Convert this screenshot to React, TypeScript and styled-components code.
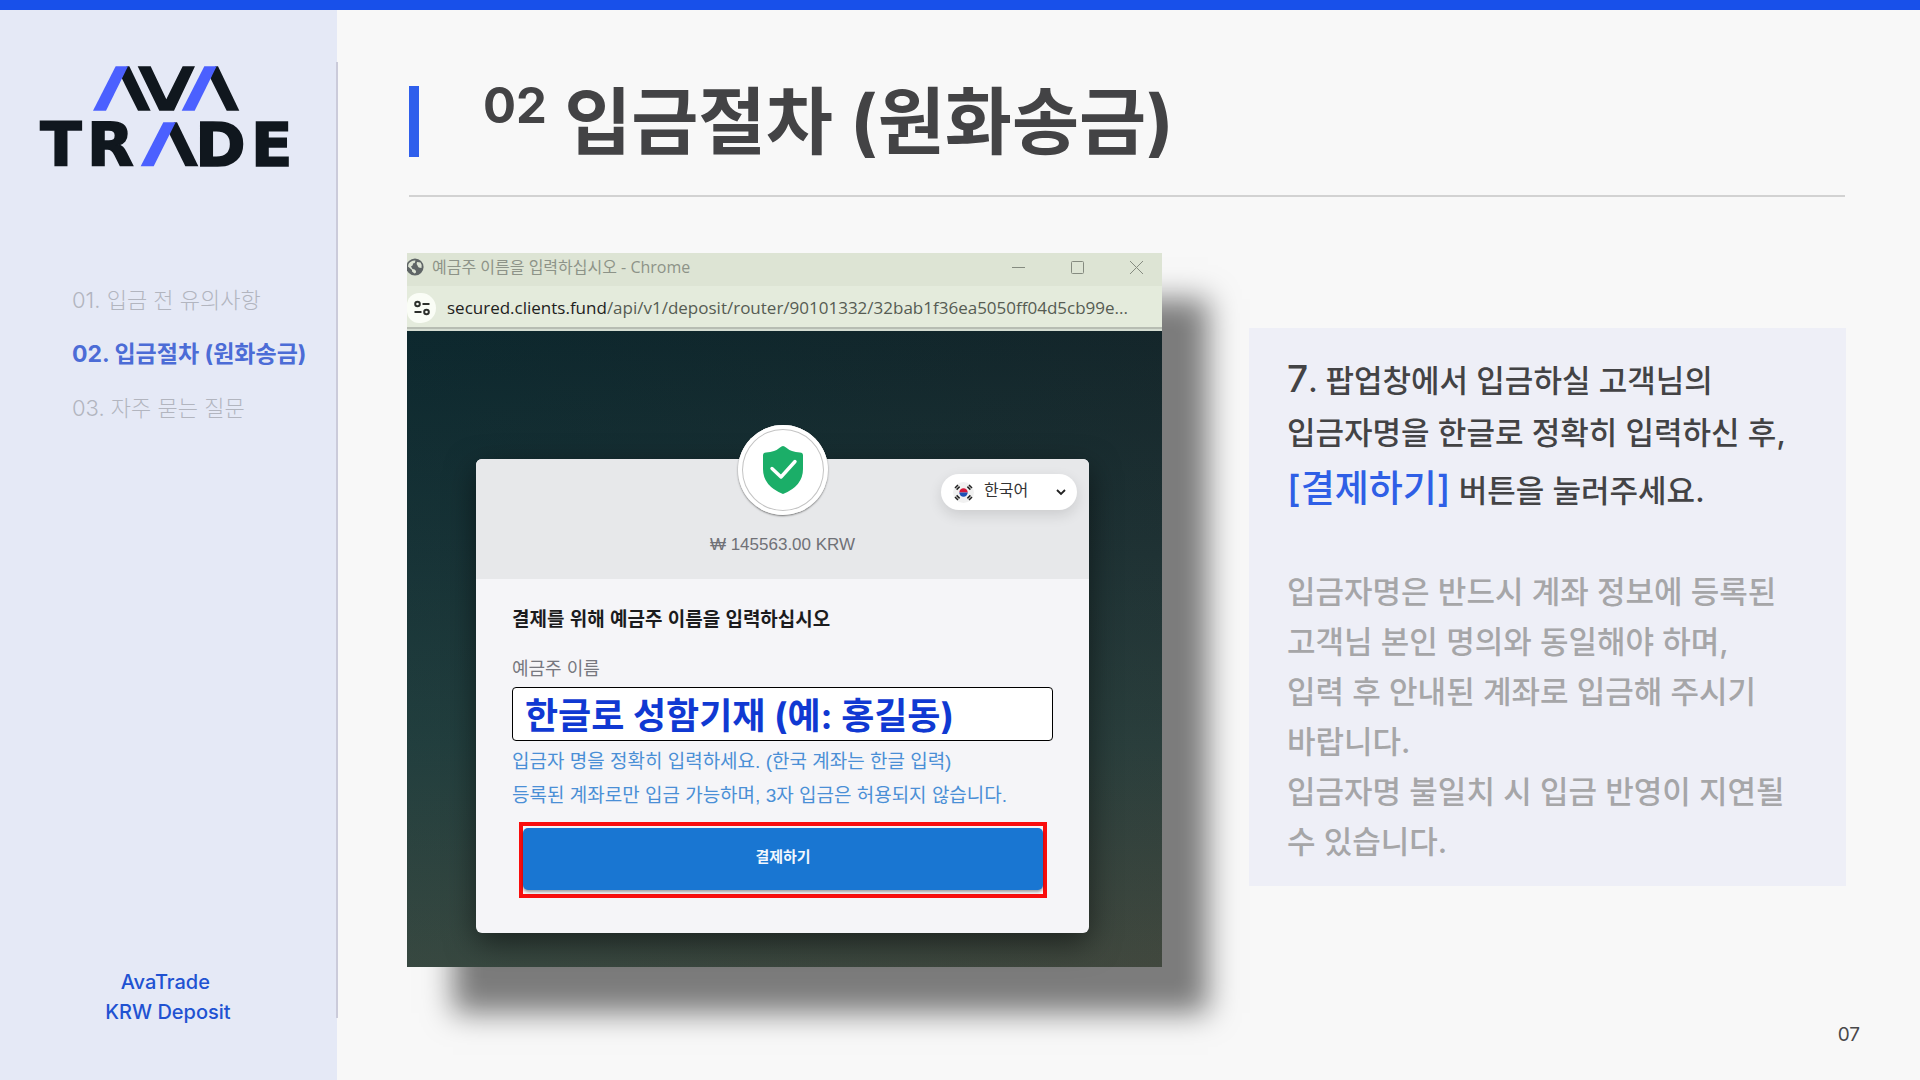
import React from "react";
import styled, { createGlobalStyle } from "styled-components";

const sans = `Inter, "Noto Sans CJK KR", sans-serif`;
const systemUi = `"Liberation Sans", "Noto Sans CJK KR", sans-serif`;
const chromeUi = `"Open Sans", "Noto Sans CJK KR", sans-serif`;

const GlobalStyle = createGlobalStyle`
  *, *::before, *::after { box-sizing: border-box; }
  body { margin: 0; background: #f8f8f8; font-family: ${sans}; color: #434345; word-break: keep-all; }
  h1, h2, p, ul { margin: 0; padding: 0; }
  button, input, select { font: inherit; margin: 0; }
`;

const Page = styled.div`
  display: flex;
  min-height: 100vh;
  border-top: 10px solid #1850ea;
`;

/* ---------- Sidebar ---------- */

const Sidebar = styled.aside`
  flex: 0 0 337px;
  display: flex;
  padding: 52px 0 62px;
  background: #e5e9f6;
`;

const SidebarInner = styled.div`
  flex: 1;
  display: flex;
  flex-direction: column;
  margin-right: -1px;
  border-right: 2px solid #cbcbda;
`;

const LogoMark = styled.svg`
  display: block;
  width: 260px;
  height: 101px;
  margin: 4px 0 0 37px;
  overflow: visible;
`;

const LogoLetters = styled.text`
  font-family: "DejaVu Sans", sans-serif;
  font-weight: 700;
  font-size: 182px;
  fill: #10171e;
  stroke: #10171e;
  stroke-width: 5px;
`;

const NavList = styled.ul`
  display: flex;
  flex-direction: column;
  gap: 22px;
  margin: 117px 0 0 72px;
  list-style: none;
`;

const NavLink = styled.a<{ $active?: boolean }>`
  display: block;
  font-size: ${(p) => (p.$active ? 23 : 22)}px;
  line-height: 32px;
  white-space: nowrap;
  text-decoration: none;
  font-weight: ${(p) => (p.$active ? 700 : 300)};
  color: ${(p) => (p.$active ? "#4c6cd6" : "#b2b5bf")};
`;

const SidebarFooter = styled.p`
  margin: auto 0 -9px;
  text-align: center;
  font-size: 20px;
  font-weight: 500;
  line-height: 30px;
  color: #2152d2;
`;

/* ---------- Main ---------- */

const Main = styled.main`
  flex: 1;
  min-width: 0;
  display: flex;
  flex-direction: column;
  padding: 76px 74px 22px 70px;
`;

const Header = styled.header`
  display: flex;
  align-items: stretch;
  gap: 64px;
  margin: 0 1px 56px 2px;
  padding-bottom: 38px;
  border-bottom: 2px solid #d2d2d2;
`;

const Accent = styled.span`
  flex: 0 0 10px;
  background: #2f5fec;
`;

const Title = styled.h1`
  height: 71px;
  font-size: 73px;
  font-weight: 700;
  line-height: 72px;
  color: #434345;
`;

const TitleNumber = styled.sup`
  font-size: 49px;
  line-height: 0;
`;

const Content = styled.div`
  display: grid;
  grid-template-columns: minmax(0, 755fr) minmax(0, 597fr);
  column-gap: 87px;
  align-items: start;
`;

/* ---------- Browser window ---------- */

const BrowserWindow = styled.section`
  box-shadow: 46px 46px 28px rgba(0, 0, 0, 0.5);
`;

const TitleBar = styled.div`
  display: flex;
  align-items: center;
  height: 33px;
  padding-right: 18px;
  background: #dde4d4;
  font-family: ${chromeUi};
  font-size: 16px;
  line-height: 24px;
  color: #8d9388;
`;

const TitleIcon = styled.svg`
  width: 17px;
  height: 18px;
  margin: 0 8px 6px 0;
`;

const WindowTitle = styled.span`
  flex: 1;
  padding-bottom: 6px;
`;

const WindowControls = styled.div`
  display: flex;
  gap: 44px;
  padding-bottom: 5px;
`;

const WindowButton = styled.button`
  display: flex;
  padding: 0;
  border: 0;
  background: none;
  color: #858b80;
`;

const AddressBar = styled.div`
  display: flex;
  align-items: center;
  gap: 11px;
  height: 45px;
  background: #e4ebdc;
  border-bottom: 2px solid #d5ddd2;
  box-shadow: inset 0 -2px 0 #b7bdb3;
  font-family: ${chromeUi};
  font-size: 17px;
  line-height: 26px;
  color: #565c53;
`;

const SiteInfo = styled.button`
  display: flex;
  align-items: center;
  justify-content: center;
  width: 29px;
  height: 30px;
  padding: 0;
  border: 0;
  border-radius: 12px 15px 15px 12px;
  background: #fafdf6;
`;

const Url = styled.span`
  min-width: 0;
  overflow: hidden;
  white-space: nowrap;
`;

const Domain = styled.span`
  color: #1e211d;
`;

const Viewport = styled.div`
  padding: 128px 73px 34px 69px;
  background:
    linear-gradient(90deg, rgba(12, 56, 58, 0.2), rgba(60, 50, 40, 0.15)),
    linear-gradient(180deg, #0d242b 0%, #1a3236 35%, #27403f 65%, #424c42 100%);
`;

const Card = styled.div`
  border-radius: 6px;
  background: #f5f5f8;
  box-shadow: 0 10px 30px rgba(0, 0, 0, 0.5);
`;

const CardHeader = styled.div`
  display: grid;
  grid-template-columns: 1fr auto 1fr;
  height: 120px;
  padding-right: 12px;
  padding-left: 12px;
  border-radius: 6px 6px 0 0;
  background: #e7e8ea;
`;

const Summary = styled.div`
  grid-column: 2;
  display: flex;
  flex-direction: column;
  align-items: center;
  margin-top: -34px;
`;

const Badge = styled.div`
  display: flex;
  align-items: center;
  justify-content: center;
  width: 90px;
  height: 90px;
  border-radius: 50%;
  background: #fff;
  box-shadow: inset 0 0 0 4px #fff, inset 0 0 0 5px #c4c4c4, 0 1px 2px rgba(0, 0, 0, 0.5);
`;

const Amount = styled.p`
  margin-top: 20px;
  font-family: ${systemUi};
  font-size: 17px;
  line-height: 20px;
  color: #707177;
`;

const LanguagePicker = styled.label`
  justify-self: end;
  display: flex;
  align-items: center;
  gap: 10px;
  width: 136px;
  height: 36px;
  margin-top: 15px;
  padding: 0 10px 0 12px;
  border-radius: 18px;
  background: #fff;
  box-shadow: 0 5px 14px rgba(0, 0, 0, 0.12);
`;

const LanguageSelect = styled.select`
  flex: 1;
  min-width: 0;
  height: 30px;
  padding: 0 0 4px;
  border: 0;
  appearance: none;
  background: none;
  font-family: ${systemUi};
  font-size: 16px;
  color: #333;
`;

const Form = styled.form`
  padding: 27px 36px 35px;
  font-family: ${systemUi};
`;

const FormTitle = styled.h2`
  font-size: 19px;
  line-height: 28px;
  font-weight: 700;
  color: #1b1b1d;
`;

const FieldLabel = styled.label`
  display: block;
  margin-top: 23px;
  font-size: 18px;
  line-height: 24px;
  color: #77787f;
`;

const NameInput = styled.input`
  display: block;
  width: 100%;
  height: 54px;
  margin: 6px 0 4px;
  padding: 0 12px 3px;
  border: 1px solid #000;
  border-radius: 4px;
  background: #fff;
  font-family: ${sans};
  font-size: 36px;
  font-weight: 700;
  color: #1039d2;
`;

const Hint = styled.p`
  font-size: 19px;
  line-height: 34px;
  white-space: nowrap;
  color: #4a8fd6;
`;

const Highlight = styled.div`
  margin: 9px 6px 0 7px;
  padding: 2px 0 4px;
  border: 4px solid #f90d0d;
`;

const PayButton = styled.button`
  display: block;
  width: 100%;
  height: 62px;
  padding: 0 0 8px;
  border: 0;
  border-radius: 5px;
  background: #1976d2;
  box-shadow: 0 2px 3px rgba(0, 0, 0, 0.35);
  font-size: 15px;
  font-weight: 700;
  color: #f2f7fd;
`;

/* ---------- Explanation panel ---------- */

const Panel = styled.section`
  margin-top: 75px;
  padding: 25px 38px 19px;
  background: #eeeff7;
  font-size: 31px;
  font-weight: 500;
`;

const Lead = styled.p`
  line-height: 52px;
  color: #434345;
`;

const Big = styled.span`
  font-size: 37px;
`;

const Strong = styled.strong`
  font-size: 37px;
  font-weight: 500;
  line-height: 60px;
  color: #2f5fe6;
`;

const Note = styled.p`
  margin-top: 48px;
  line-height: 50px;
  color: #a6a6a8;
`;

const PageNumber = styled.footer`
  margin: auto -14px 0 0;
  text-align: right;
  font-size: 19px;
  line-height: 46px;
  color: #48484a;
`;

const Logo = () => (
  <LogoMark viewBox="111 197 780 303" role="img" aria-label="AvaTrade">
    <g fill="#10171e">
      <polygon points="388,198 452,331 414,331 365,233 380,198" />
      <polygon points="413,198 452,198 499,297 548,198 585,198 522,331 478,331" />
      <polygon points="654,198 718,331 680,331 631,233 646,198" />
      <polygon points="531,366 595,498 556,498 508,400 522,366" />
    </g>
    <g fill="#4b60ff">
      <polygon points="347,198 384,198 318,331 279,331" />
      <polygon points="613,198 650,198 584,331 545,331" />
      <polygon points="490,366 527,366 461,498 422,498" />
    </g>
    <LogoLetters x="121 261" y="496">TR</LogoLetters>
    <LogoLetters x="586 753" y="496">DE</LogoLetters>
  </LogoMark>
);

const Globe = () => (
  <TitleIcon viewBox="0 0 17 18" aria-hidden="true">
    <circle cx="8" cy="9" r="8.6" fill="#5f6566" />
    <path
      d="M1 8.5 L5 12 L5 13.5 L7.5 15.5 Q9.5 15 9 13 Q8 11 5.5 11 L4 8.5 Q6.500 7.500 6 5.500 Q8.500 5 8.500 2.500 Q4 2 1.500 6 Z M10 4 Q9 6 10.500 7.500 Q11 10 14.500 10 Q15.500 7 13.500 4.500 Z"
      fill="#dde4d4"
    />
  </TitleIcon>
);

const Tune = () => (
  <svg width="16" height="16" viewBox="0 0 16 16" fill="none" stroke="#2c2f2b" strokeWidth="2" aria-hidden="true">
    <circle cx="3.500" cy="4" r="2.300" />
    <path d="M8.500 4 H15.500 M0.500 12 H7.500" />
    <circle cx="12.500" cy="12" r="2.300" />
  </svg>
);

const Shield = () => (
  <svg width="42" height="50" viewBox="0 0 42 50" aria-hidden="true">
    <path
      d="M21 1 Q22.500 1 24 2.500 Q29 7 38 7.500 Q41 7.700 41 10.500 V24 Q41 41 21 49 Q1 41 1 24 V10.500 Q1 7.700 4 7.500 Q13 7 18 2.500 Q19.500 1 21 1 Z"
      fill="#1bae68"
    />
    <path d="M10 23.500 L19 32 L33 16.500" fill="none" stroke="#fff" strokeWidth="3.400" strokeLinecap="round" strokeLinejoin="round" />
  </svg>
);

const Flag = () => (
  <svg width="21" height="21" viewBox="0 0 21 21" aria-hidden="true">
    <circle cx="10.500" cy="10.500" r="10.500" fill="#f1f1f1" />
    <path d="M6.300 10.500 A4.200 4.200 0 0 1 14.700 10.500 Z" fill="#d4183a" />
    <path d="M6.300 10.500 A4.200 4.200 0 0 0 14.700 10.500 Z" fill="#1d50b5" />
    <g stroke="#222" strokeWidth="1.500">
      <path d="M2 6 L5 3 M3.600 7.600 L6.600 4.600" />
      <path d="M16 3 L19 6 M14.400 4.600 L17.400 7.600" />
      <path d="M2 15 L5 18 M3.600 13.400 L6.600 16.400" />
      <path d="M16 18 L19 15 M14.400 16.400 L17.400 13.400" />
    </g>
  </svg>
);

const navItems = [
  { label: "01. 입금 전 유의사항" },
  { label: "02. 입금절차 (원화송금)", active: true },
  { label: "03. 자주 묻는 질문" },
];

export default function App() {
  return (
    <>
      <GlobalStyle />
      <Page>
        <Sidebar>
          <SidebarInner>
            <Logo />
            <nav>
              <NavList>
                {navItems.map((item) => (
                  <li key={item.label}>
                    <NavLink href="#" $active={item.active}>
                      {item.label}
                    </NavLink>
                  </li>
                ))}
              </NavList>
            </nav>
            <SidebarFooter>
              AvaTrade&nbsp;
              <br />
              KRW Deposit
            </SidebarFooter>
          </SidebarInner>
        </Sidebar>

        <Main>
          <Header>
            <Accent />
            <Title>
              <TitleNumber>02</TitleNumber> 입금절차 (원화송금)
            </Title>
          </Header>

          <Content>
            <BrowserWindow>
              <TitleBar>
                <Globe />
                <WindowTitle>예금주 이름을 입력하십시오 - Chrome</WindowTitle>
                <WindowControls>
                  <WindowButton aria-label="최소화">
                    <svg width="15" height="15" viewBox="0 0 15 15" stroke="currentColor">
                      <path d="M1 7.500 H14" />
                    </svg>
                  </WindowButton>
                  <WindowButton aria-label="최대화">
                    <svg width="15" height="15" viewBox="0 0 15 15" fill="none" stroke="currentColor">
                      <rect x="1.500" y="1.500" width="12" height="12" rx="1" />
                    </svg>
                  </WindowButton>
                  <WindowButton aria-label="닫기">
                    <svg width="15" height="15" viewBox="0 0 15 15" stroke="currentColor">
                      <path d="M1 1 L14 14 M14 1 L1 14" />
                    </svg>
                  </WindowButton>
                </WindowControls>
              </TitleBar>
              <AddressBar>
                <SiteInfo aria-label="사이트 정보">
                  <Tune />
                </SiteInfo>
                <Url>
                  <Domain>secured.clients.fund</Domain>
                  /api/v1/deposit/router/90101332/32bab1f36ea5050ff04d5cb99e...
                </Url>
              </AddressBar>
              <Viewport>
                <Card>
                  <CardHeader>
                    <Summary>
                      <Badge>
                        <Shield />
                      </Badge>
                      <Amount>₩ 145563.00 KRW</Amount>
                    </Summary>
                    <LanguagePicker>
                      <Flag />
                      <LanguageSelect aria-label="언어" defaultValue="ko">
                        <option value="ko">한국어</option>
                      </LanguageSelect>
                      <svg width="12" height="12" viewBox="0 0 12 12" fill="none" stroke="#222" strokeWidth="1.800" aria-hidden="true">
                        <path d="M2 4 L6 8 L10 4" />
                      </svg>
                    </LanguagePicker>
                  </CardHeader>
                  <Form onSubmit={(e: React.FormEvent) => e.preventDefault()}>
                    <FormTitle>결제를 위해 예금주 이름을 입력하십시오</FormTitle>
                    <FieldLabel htmlFor="holder">예금주 이름</FieldLabel>
                    <NameInput id="holder" type="text" defaultValue="한글로 성함기재 (예: 홍길동)" />
                    <Hint>입금자 명을 정확히 입력하세요. (한국 계좌는 한글 입력)</Hint>
                    <Hint>등록된 계좌로만 입금 가능하며, 3자 입금은 허용되지 않습니다.</Hint>
                    <Highlight>
                      <PayButton type="submit">결제하기</PayButton>
                    </Highlight>
                  </Form>
                </Card>
              </Viewport>
            </BrowserWindow>

            <Panel>
              <Lead>
                <Big>7</Big>. 팝업창에서 입금하실 고객님의
                <br />
                입금자명을 한글로 정확히 입력하신 후,
                <br />
                <Strong>[결제하기]</Strong> 버튼을 눌러주세요.
              </Lead>
              <Note>
                입금자명은 반드시 계좌 정보에 등록된 고객님 본인 명의와 동일해야 하며,
                <br />
                입력 후 안내된 계좌로 입금해 주시기 바랍니다.
                <br />
                입금자명 불일치 시 입금 반영이 지연될 수 있습니다.
              </Note>
            </Panel>
          </Content>

          <PageNumber>07</PageNumber>
        </Main>
      </Page>
    </>
  );
}
